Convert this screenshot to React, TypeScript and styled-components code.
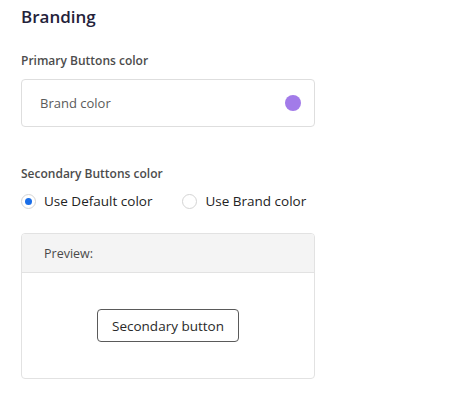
import React, { useState } from "react";
import styled, { createGlobalStyle } from "styled-components";

const Global = createGlobalStyle`
  html, body { margin: 0; padding: 0; background: #ffffff; }
  body { font-family: "Open Sans", "Liberation Sans", sans-serif; }
  * { box-sizing: border-box; }
`;

const Page = styled.div`
  width: 464px;
  padding: 4px 0 0 21px;
  display: flex;
  flex-direction: column;
`;

const Title = styled.h2`
  margin: 0;
  font-size: 17px;
  line-height: 26px;
  font-weight: 600;
  color: #24223a;
`;

const Label = styled.div<{ $top: number }>`
  margin-top: ${(p) => p.$top}px;
  font-size: 12px;
  line-height: 16px;
  font-weight: 600;
  color: #4c4c4c;
`;

const ColorField = styled.div`
  margin-top: 10px;
  width: 294px;
  height: 48px;
  border: 1px solid #dedede;
  border-radius: 4px;
  display: flex;
  align-items: center;
  justify-content: space-between;
  padding: 0 13px 0 18px;
`;

const FieldText = styled.span`
  font-size: 13px;
  color: #5a5a5a;
`;

const Swatch = styled.span<{ $color: string }>`
  width: 16px;
  height: 16px;
  border-radius: 50%;
  background: ${(p) => p.$color};
`;

const RadioRow = styled.div`
  margin-top: 9px;
  display: flex;
  align-items: center;
  gap: 30px;
`;

const RadioOption = styled.label`
  display: flex;
  align-items: center;
  gap: 8px;
  cursor: pointer;
  font-size: 13.5px;
  font-weight: 500;
  color: #232323;
  line-height: 20px;
`;

const RadioCircle = styled.span<{ $checked: boolean }>`
  width: 15px;
  height: 15px;
  border-radius: 50%;
  border: 1px solid #d4d4d4;
  background: #fff;
  display: flex;
  align-items: center;
  justify-content: center;
  &::after {
    content: "";
    width: 7px;
    height: 7px;
    border-radius: 50%;
    background: ${(p) => (p.$checked ? "#1a6ee8" : "transparent")};
  }
`;

const PreviewCard = styled.div`
  margin-top: 22px;
  width: 294px;
  height: 146px;
  border: 1px solid #e2e2e2;
  border-radius: 4px;
  display: flex;
  flex-direction: column;
  overflow: hidden;
`;

const PreviewHeader = styled.div`
  height: 39px;
  background: #f4f4f4;
  border-bottom: 1px solid #e2e2e2;
  display: flex;
  align-items: center;
  padding-left: 22px;
  font-size: 12.5px;
  color: #4a4a4a;
`;

const PreviewBody = styled.div`
  flex: 1;
  display: flex;
  align-items: center;
  justify-content: center;
`;

const SecondaryButton = styled.button`
  width: 142px;
  height: 33px;
  border: 1px solid #5a5a5a;
  border-radius: 4px;
  background: #fff;
  font-family: "Open Sans", "Liberation Sans", sans-serif;
  font-size: 13.5px;
  color: #2a2a2a;
  padding: 0;
`;

export default function App() {
  const [choice, setChoice] = useState<"default" | "brand">("default");
  return (
    <>
      <Global />
      <Page>
        <Title>Branding</Title>
        <Label $top={23}>Primary Buttons color</Label>
        <ColorField>
          <FieldText>Brand color</FieldText>
          <Swatch $color="#a27be9" />
        </ColorField>
        <Label $top={39}>Secondary Buttons color</Label>
        <RadioRow>
          <RadioOption onClick={() => setChoice("default")}>
            <RadioCircle $checked={choice === "default"} />
            Use Default color
          </RadioOption>
          <RadioOption onClick={() => setChoice("brand")}>
            <RadioCircle $checked={choice === "brand"} />
            Use Brand color
          </RadioOption>
        </RadioRow>
        <PreviewCard>
          <PreviewHeader>Preview:</PreviewHeader>
          <PreviewBody>
            <SecondaryButton>Secondary button</SecondaryButton>
          </PreviewBody>
        </PreviewCard>
      </Page>
    </>
  );
}
